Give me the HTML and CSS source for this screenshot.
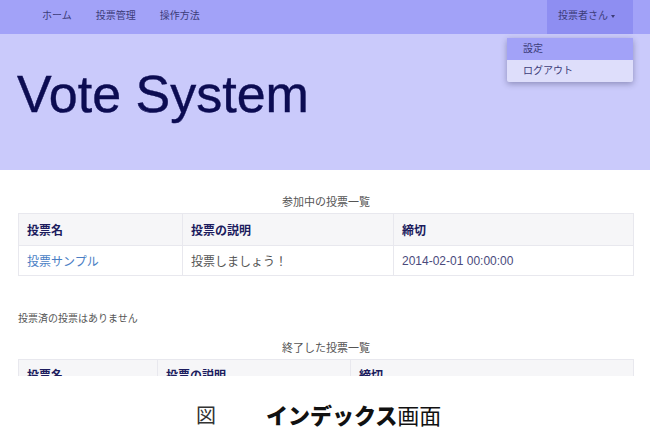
FILE: index.html
```html
<!DOCTYPE html>
<html lang="ja">
<head>
    <meta charset="UTF-8">
    <meta name="viewport" content="width=device-width, initial-scale=1.0">
    <title>Vote System</title>
    <link rel="stylesheet" href="styles.css">
</head>
<body>
    <div class="page">
        <div class="navbar">
            <ul class="nav">
                <li>ホーム</li>
                <li>投票管理</li>
                <li>操作方法</li>
            </ul>
            <div class="user">
                <span>投票者さん</span><span class="caret"></span>
                <ul class="menu">
                    <li class="active">設定</li>
                    <li>ログアウト</li>
                </ul>
            </div>
        </div>
        <div class="jumbotron">
            <h1>Vote System</h1>
        </div>
        <div class="content">
            <div class="caption">参加中の投票一覧</div>
            <table class="list first">
                <tr>
                    <th class="c1">投票名</th>
                    <th class="c2">投票の説明</th>
                    <th>締切</th>
                </tr>
                <tr>
                    <td><a href="#">投票サンプル</a></td>
                    <td>投票しましょう！</td>
                    <td class="date">2014-02-01 00:00:00</td>
                </tr>
            </table>
            <p class="none">投票済の投票はありません</p>
            <div class="caption">終了した投票一覧</div>
            <table class="list second">
                <tr>
                    <th class="c1">投票名</th>
                    <th class="c2">投票の説明</th>
                    <th>締切</th>
                </tr>
            </table>
        </div>
    </div>
    <div class="figure">
        <span class="zu">図</span>
        <span class="title"><b>インデックス</b>画面</span>
    </div>
</body>
</html>
```

FILE: styles.css
```css
body {
    margin: 0;
    background-color: #fff;
    font-family: "Liberation Sans", "Noto Sans CJK JP", sans-serif;
    color: #555;
}
.page {
    height: 376px;
    overflow: hidden;
}
.navbar {
    height: 34px;
    background-color: #a2a2f8;
    display: flex;
    justify-content: space-between;
    padding: 0 17px 0 30px;
}
.nav {
    list-style: none;
    margin: 0;
    padding: 0;
    display: flex;
}
.nav li {
    font-size: 10px;
    line-height: 31px;
    padding: 0 12px;
    color: #3c3c78;
}
.user {
    position: relative;
    background-color: #8e8ef2;
    width: 86px;
    font-size: 10px;
    line-height: 31px;
    color: #3c3c78;
    padding-left: 11px;
    box-sizing: border-box;
}
.caret {
    display: inline-block;
    margin-left: 3px;
    vertical-align: middle;
    border-top: 3px solid #3c3c78;
    border-left: 2px solid transparent;
    border-right: 2px solid transparent;
}
.menu {
    position: absolute;
    top: 38px;
    right: 0;
    width: 126px;
    list-style: none;
    margin: 0;
    padding: 0;
    background-color: #dedefb;
    box-shadow: 0 2px 6px rgba(0, 0, 40, 0.3);
    border-radius: 2px;
    z-index: 2;
}
.menu li {
    height: 22px;
    line-height: 21px;
    padding-left: 16px;
    font-size: 10px;
    color: #3c3c78;
}
.menu li.active {
    background-color: #a2a2f8;
}
.jumbotron {
    height: 136px;
    background-color: #cacafb;
    padding: 0 17px;
    box-sizing: border-box;
    display: flex;
    align-items: center;
}
.jumbotron h1 {
    margin: 0 0 16px;
    font-size: 52px;
    font-weight: normal;
    color: #0c0c52;
    -webkit-text-stroke: 0.4px #0c0c52;
}
.content {
    padding: 24px 16px 0 18px;
}
.caption {
    text-align: center;
    font-size: 11px;
    line-height: 16px;
    height: 19px;
}
.list {
    width: 100%;
    border-collapse: collapse;
    font-size: 12px;
}
.list th,
.list td {
    border: 1px solid #e8e8ee;
    text-align: left;
    padding: 0 8px;
}
.list th {
    height: 31px;
    background-color: #f6f6f8;
    color: #1c1c5e;
    font-weight: bold;
}
.list td {
    height: 29px;
}
.first .c1 {
    width: 147px;
}
.first .c2 {
    width: 194px;
}
.second .c1 {
    width: 122px;
}
.second .c2 {
    width: 176px;
}
.list a {
    color: #4a7ec4;
    text-decoration: none;
}
.date {
    color: #4a4a7c;
}
.none {
    font-size: 10px;
    margin: 36px 0 14px;
    line-height: 14px;
}
.second th {
    height: 29px;
}
.figure {
    padding: 22px 0 0 196px;
    color: #111;
    display: flex;
    align-items: center;
    font-family: "Noto Sans CJK JP", sans-serif;
}
.zu {
    color: #333;
    font-size: 20px;
    width: 70px;
}
.title {
    font-size: 22px;
}
.title b {
    font-weight: 900;
}
```
